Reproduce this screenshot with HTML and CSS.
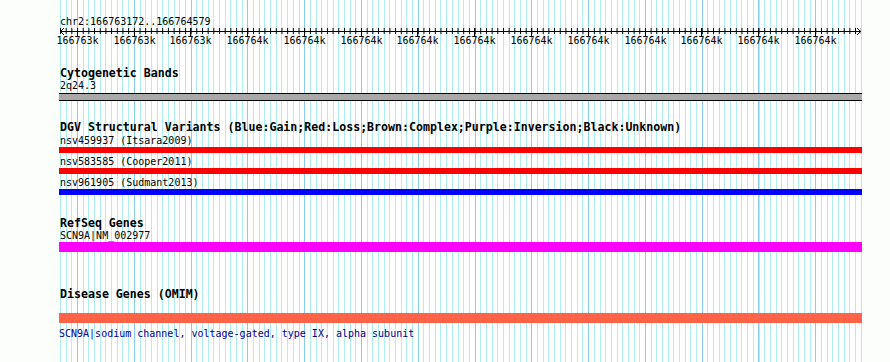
FILE: index.html
```html
<!DOCTYPE html>
<html>
    <head>
        <meta charset="UTF-8">
        <meta name="viewport" content="width=device-width, initial-scale=1.0">
        <link rel="stylesheet" href="styles.css">
    </head>
    <body>
        <div class="browser">
            <div class="loc">chr2:166763172..166764579</div>

            <!-- ruler: minor tick every 10bp, labelled major tick every 100bp -->
            <svg class="ruler" width="803" height="20" viewBox="0 0 803 20">
                <defs>
                    <pattern id="minor" x="1" y="0" width="5.679" height="20" patternUnits="userSpaceOnUse">
                        <rect x="0" y="0" width="1" height="6" fill="#000"/>
                    </pattern>
                </defs>
                <rect x="1" y="0" width="801" height="6" fill="url(#minor)"/>
                <line x1="1" y1="3.5" x2="802" y2="3.5" stroke="#000"/>
                <polyline points="5,0 1.5,3.5 5,7" fill="none" stroke="#000"/>
                <polyline points="798,0 801.5,3.5 798,7" fill="none" stroke="#000"/>
                <g fill="#000">
                    <rect x="18" y="0" width="1" height="8"/>
                    <rect x="75" y="0" width="1" height="8"/>
                    <rect x="131" y="0" width="1" height="8"/>
                    <rect x="188" y="0" width="1" height="8"/>
                    <rect x="245" y="0" width="1" height="8"/>
                    <rect x="302" y="0" width="1" height="8"/>
                    <rect x="358" y="0" width="1" height="8"/>
                    <rect x="415" y="0" width="1" height="8"/>
                    <rect x="472" y="0" width="1" height="8"/>
                    <rect x="529" y="0" width="1" height="8"/>
                    <rect x="586" y="0" width="1" height="8"/>
                    <rect x="642" y="0" width="1" height="8"/>
                    <rect x="699" y="0" width="1" height="8"/>
                    <rect x="756" y="0" width="1" height="8"/>
                </g>
                <g class="ticklabels" text-anchor="middle">
                    <text x="18.5" y="16">166763k</text>
                    <text x="75.5" y="16">166763k</text>
                    <text x="131.5" y="16">166763k</text>
                    <text x="188.5" y="16">166764k</text>
                    <text x="245.5" y="16">166764k</text>
                    <text x="302.5" y="16">166764k</text>
                    <text x="358.5" y="16">166764k</text>
                    <text x="415.5" y="16">166764k</text>
                    <text x="472.5" y="16">166764k</text>
                    <text x="529.5" y="16">166764k</text>
                    <text x="586.5" y="16">166764k</text>
                    <text x="642.5" y="16">166764k</text>
                    <text x="699.5" y="16">166764k</text>
                    <text x="756.5" y="16">166764k</text>
                </g>
            </svg>

            <div class="track-title cyto-title">Cytogenetic Bands</div>
            <div class="track-label">2q24.3</div>
            <div class="band"></div>

            <div class="track-title dgv-title">DGV Structural Variants (Blue:Gain;Red:Loss;Brown:Complex;Purple:Inversion;Black:Unknown)</div>
            <div class="track-label first">nsv459937 (Itsara2009)</div>
            <div class="bar loss"></div>
            <div class="track-label">nsv583585 (Cooper2011)</div>
            <div class="bar loss"></div>
            <div class="track-label">nsv961905 (Sudmant2013)</div>
            <div class="bar gain"></div>

            <div class="track-title refseq-title">RefSeq Genes</div>
            <div class="track-label first">SCN9A|NM_002977</div>
            <div class="bar thick gene"></div>

            <div class="track-title omim-title">Disease Genes (OMIM)</div>
            <div class="bar thick omim"></div>
            <div class="track-label omim-label">SCN9A|sodium channel, voltage-gated, type IX, alpha subunit</div>
        </div>
    </body>
</html>
```

FILE: styles.css
```css
body{
    margin: 0;
    background: #fcfefc;
    font-family: "DejaVu Sans Mono", "Liberation Mono", monospace;
    color: #000;
}
.browser{
    margin-left: 59px;
    width: 803px;
    height: 362px;
    background-color: #fff;
    background-image:
        repeating-linear-gradient(to right, #87ceeb 0 1px, transparent 1px 56.79px),
        repeating-linear-gradient(to right, #afeeee 0 1px, transparent 1px 5.679px);
    background-position: 18px 0, 1px 0;
    background-repeat: no-repeat;
}
.loc{
    padding: 15px 0 0 1px;
    font-size: 10px;
    line-height: 13px;
    height: 13px;
}
.ruler{
    display: block;
    overflow: visible;
}
.ruler .ticklabels{
    font-family: "DejaVu Sans Mono", monospace;
    font-size: 10px;
}

.track-title{
    font-weight: bold;
    font-size: 11.6px;
    line-height: 13px;
    height: 13px;
    padding-left: 1px;
    white-space: nowrap;
}
.track-label{
    font-size: 10px;
    line-height: 11px;
    height: 11px;
    padding-left: 1px;
    margin-top: 3px;
    white-space: nowrap;
}
.track-label.first{
    margin-top: 1px;
}
.cyto-title{ margin-top: 19px; }
.cyto-title + .track-label{ margin-top: 0; }
.dgv-title{ margin-top: 20px; }
.refseq-title{ margin-top: 22px; }
.refseq-title + .track-label{ margin-top: 0; }
.omim-title{ margin-top: 36px; }

.band{
    margin-top: 2px;
    height: 6px;
    background: #a9a9a9;
    border-top: 1px solid #000;
    border-bottom: 1px solid #000;
}
.bar{
    margin-top: 1px;
    height: 6px;
}
.bar.thick{
    height: 10px;
}
.loss{ background: #ff0000; }
.gain{ background: #0000ff; }
.gene{ background: #ff00ff; }
.omim{
    background: #ff6347;
    margin-top: 12px;
}
.omim-label{
    margin-top: 5px;
    padding-left: 0;
    color: #00008b;
}
```
